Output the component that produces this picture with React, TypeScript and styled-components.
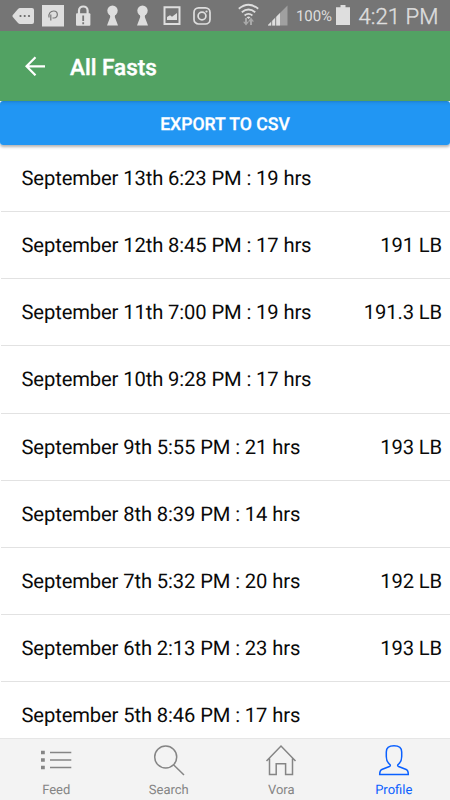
import React from 'react';
import styled, { createGlobalStyle } from 'styled-components';

const GlobalStyle = createGlobalStyle`
  * { box-sizing: border-box; }
  body {
    margin: 0;
    background: #fff;
    font-family: Roboto, "Liberation Sans", sans-serif;
    text-rendering: geometricPrecision;
  }
`;

const Screen = styled.div`
  width: 450px;
  height: 800px;
  display: flex;
  flex-direction: column;
  overflow: hidden;
  background: #fff;
`;

const StatusBar = styled.div`
  height: 31px;
  flex: none;
  display: flex;
  align-items: flex-start;
  padding-left: 12px;
  background: #757575;
  color: #dedede;
`;

const StatusIcon = styled.svg<{ $gap?: number }>`
  flex: none;
  display: block;
  margin-left: ${(p) => p.$gap ?? 0}px;
`;

const BatteryText = styled.span`
  width: 36px;
  margin-left: 7px;
  font-size: 15px;
  line-height: 33px;
  letter-spacing: -0.1px;
  white-space: nowrap;
`;

const Clock = styled.span`
  margin-left: 8.5px;
  font-size: 22.2px;
  font-weight: 300;
  line-height: 34px;
  white-space: nowrap;
  -webkit-text-stroke: 0.4px #dedede;
`;

const Header = styled.header`
  height: 70px;
  flex: none;
  display: flex;
  align-items: center;
  padding: 0 0 0 25px;
  background: #52a263;
  color: #fff;
`;

const Title = styled.h1`
  margin: 0 0 0 25px;
  font-size: 22.5px;
  font-weight: 500;
  line-height: 30px;
  padding-top: 4px;
  -webkit-text-stroke: 0.4px #fff;
`;

const ExportButton = styled.button`
  height: 44px;
  flex: none;
  border: 0;
  border-radius: 3px;
  padding: 4px 0 0;
  background: linear-gradient(#1d80d1 0, #2090ea 2px, #2196f3 5px);
  box-shadow: 0 2px 3px rgba(0, 0, 0, 0.3);
  color: #fff;
  font-family: inherit;
  font-size: 17.6px;
  font-weight: 500;
  text-rendering: geometricPrecision;
  -webkit-text-stroke: 0.3px #fff;
`;

const List = styled.ul`
  list-style: none;
  flex: 1;
  min-height: 0;
  overflow: hidden;
  margin: 0;
  padding: 0;
`;

const Row = styled.li`
  height: 67.13px;
  display: flex;
  align-items: center;
  justify-content: space-between;
  margin-left: 1px;
  padding: 0 8px 0 20.5px;
  border-bottom: 1px solid #e2e2e2;
  color: #0a0a0a;
  font-size: 20.2px;
  letter-spacing: -0.12px;
  white-space: nowrap;
`;

const TabBar = styled.nav`
  height: 62px;
  flex: none;
  display: grid;
  grid-template-columns: repeat(4, 1fr);
  border-top: 1px solid #e6e6e6;
  background: #f3f3f3;
`;

const Tab = styled.div<{ $active?: boolean }>`
  display: flex;
  flex-direction: column;
  align-items: center;
  padding-top: 5px;
  color: ${(p) => (p.$active ? '#0a60ff' : '#858585')};
  font-size: 13px;
  line-height: 18px;
`;

const TabIcon = styled.svg`
  width: 32px;
  height: 32px;
  margin-bottom: 6px;
  fill: none;
  stroke: currentColor;
  stroke-width: 1.5;
`;

const fasts = [
  ['September 13th 6:23 PM : 19 hrs', ''],
  ['September 12th 8:45 PM : 17 hrs', '191 LB'],
  ['September 11th 7:00 PM : 19 hrs', '191.3 LB'],
  ['September 10th 9:28 PM : 17 hrs', ''],
  ['September 9th 5:55 PM : 21 hrs', '193 LB'],
  ['September 8th 8:39 PM : 14 hrs', ''],
  ['September 7th 5:32 PM : 20 hrs', '192 LB'],
  ['September 6th 2:13 PM : 23 hrs', '193 LB'],
  ['September 5th 8:46 PM : 17 hrs', ''],
];

const Keyhole = ({ gap }: { gap: number }) => (
  <StatusIcon $gap={gap} width="12" height="31" viewBox="0 0 12 31" fill="#dedede">
    <circle cx="5.500" cy="10.800" r="5.200" />
    <path d="M2.800 13h5.400l-.4 4L11 25.500H0L3.200 17z" />
  </StatusIcon>
);

const StatusIcons = () => (
  <>
    <StatusIcon width="22" height="31" viewBox="0 0 22 31">
      <path d="M8 8h12q2 0 2 2v12q0 2-2 2H8q-1 0-2-1L.8 17q-.8-1 0-2L6 9q1-1 2-1z" fill="#dedede" />
      <g fill="#666"><circle cx="8.5" cy="16" r="1.1" /><circle cx="12.700" cy="16" r="1.1" /><circle cx="17" cy="16" r="1.1" /></g>
    </StatusIcon>
    <StatusIcon $gap={8} width="22" height="31" viewBox="0 0 22 31">
      <path d="M0 5h22v21.500H0z" fill="#dedede" />
      <path d="M8.800 20.500v-6M7 17.500c-.8-4 1.500-6.500 4.700-6.500 4.800 0 4.800 7 .3 7h-1.500" fill="none" stroke="#777" strokeWidth="1.2" />
    </StatusIcon>
    <StatusIcon $gap={12} width="15" height="31" viewBox="0 0 15 31">
      <path d="M3 14V10.500a4.300 4 0 0 1 8.600 0V14" fill="none" stroke="#dedede" strokeWidth="2.200" />
      <rect y="13.200" width="14.400" height="12.500" rx="1" fill="#dedede" />
      <path d="M7.200 15.500v5.500M7.200 22.300v2" stroke="#777" strokeWidth="1.800" />
    </StatusIcon>
    <Keyhole gap={16} />
    <Keyhole gap={18} />
    <StatusIcon $gap={14} width="18" height="31" viewBox="0 0 18 31">
      <path d="M1.500 7.200h15v16.700h-15z" fill="none" stroke="#dedede" strokeWidth="2" />
      <path d="M4 20v-3l3-1.700 2 1.500 5-3.800v7z" fill="#dedede" />
    </StatusIcon>
    <StatusIcon $gap={12} width="18" height="31" viewBox="0 0 18 31" fill="none" stroke="#dedede" strokeWidth="1.7">
      <rect x="1" y="7.800" width="16" height="16.200" rx="4.600" />
      <circle cx="9" cy="16" r="3.900" />
      <circle cx="13.500" cy="11.500" r="1.100" fill="#dedede" stroke="none" />
    </StatusIcon>
    <StatusIcon $gap={27} width="21" height="31" viewBox="0 0 21 31" fill="none" stroke="#dedede" strokeWidth="1.800">
      <path d="M.8 8.800q9.700-8 19.400 0M3.800 12.200q6.700-5.400 13.400 0M6.600 15.500q3.900-3.200 7.800 0" />
      <path d="M8.500 17.200q2-1.500 4 0L10.500 19z" fill="#dedede" stroke="none" />
      <path d="M8 18v5M13 25v-5" stroke="#a9a9a9" strokeWidth="2" />
      <path d="M5 21.800h6l-3 3.800zM10 21.400h6L13 17.600z" fill="#a9a9a9" stroke="none" />
    </StatusIcon>
    <StatusIcon $gap={9} width="21" height="31" viewBox="0 0 21 31">
      <path d="M-.5 25.500L19.500 5.500v20z" fill="#a0a0a0" />
      <path d="M-.5 25.500L12 13v12.500z" fill="#dedede" />
      <path d="M3.700 20v6M7.700 16v10" stroke="#757575" strokeWidth=".9" />
    </StatusIcon>
  </>
);

export default function App() {
  return (
    <>
      <GlobalStyle />
      <Screen>
        <StatusBar>
          <StatusIcons />
          <BatteryText>100%</BatteryText>
          <StatusIcon $gap={4} width="14" height="31" viewBox="0 0 14 31" fill="#dedede">
            <path d="M4.500 5h5v2.200H14V25H0V7.200h4.500z" />
          </StatusIcon>
          <Clock>4:21 PM</Clock>
        </StatusBar>
        <Header>
          <svg width="20" height="20" viewBox="0 0 20 20" fill="none" stroke="#fff" strokeWidth="2.200">
            <path d="M20 10.300H2M10.500 1.300l-9 9 9 9" />
          </svg>
          <Title>All Fasts</Title>
        </Header>
        <ExportButton>EXPORT TO CSV</ExportButton>
        <List>
          {fasts.map(([label, weight]) => (
            <Row key={label}>
              <span>{label}</span>
              <span>{weight}</span>
            </Row>
          ))}
        </List>
        <TabBar>
          <Tab>
            <TabIcon viewBox="0 0 32 32">
              <path d="M10 8.500h21.300M10 16h21.300M10 23.500h21.300" />
              <path d="M1 6.700h3.800v3.600H1zM1 14.200h3.800v3.600H1zM1 21.700h3.800v3.600H1z" fill="currentColor" stroke="none" />
            </TabIcon>
            Feed
          </Tab>
          <Tab>
            <TabIcon viewBox="0 0 32 32">
              <circle cx="12.700" cy="13" r="11" />
              <path d="M20.500 20.800L31 31" />
            </TabIcon>
            Search
          </Tab>
          <Tab>
            <TabIcon viewBox="0 0 32 32">
              <path d="M1.500 17L16 2l14.500 15M4.500 14.500v16h6.700V19.700h9.400v10.800h6.900v-16" />
            </TabIcon>
            Vora
          </Tab>
          <Tab $active>
            <TabIcon viewBox="0 0 32 32">
              <path d="M16 1.800c-5 0-7.700 2.400-7.700 6.200v4.500c0 3.500 1.500 6.300 3.400 7.800 1 .9.800 1.700-.3 2.200l-7.600 3c-1.700.7-2.100 2.500-2.100 5h28.600c0-2.500-.4-4.300-2.100-5l-7.600-3c-1.100-.5-1.300-1.300-.3-2.200 1.900-1.500 3.400-4.300 3.400-7.800V8c0-3.800-2.700-6.200-7.700-6.200z" />
            </TabIcon>
            Profile
          </Tab>
        </TabBar>
      </Screen>
    </>
  );
}
